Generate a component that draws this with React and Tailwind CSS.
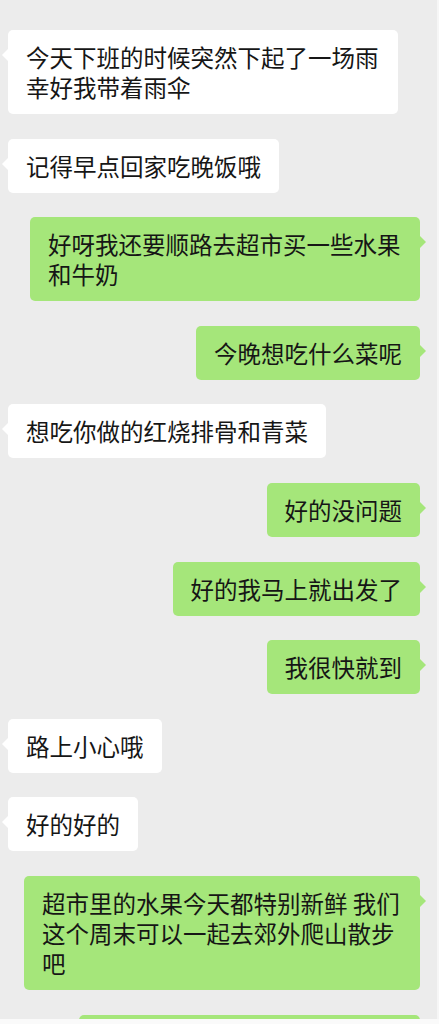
import React from "react";

// neutral placeholder text, same character counts as the reference bubbles
const messages = [
  { side: "left", text: "今天下班的时候突然下起了一场雨幸好我带着雨伞", w: "w-[390px]" },
  { side: "left", text: "记得早点回家吃晚饭哦" },
  { side: "right", text: "好呀我还要顺路去超市买一些水果和牛奶", w: "w-[390px]" },
  { side: "right", text: "今晚想吃什么菜呢" },
  { side: "left", text: "想吃你做的红烧排骨和青菜" },
  { side: "right", text: "好的没问题" },
  { side: "right", text: "好的我马上就出发了" },
  { side: "right", text: "我很快就到" },
  { side: "left", text: "路上小心哦" },
  { side: "left", text: "好的好的" },
  { side: "right", text: "超市里的水果今天都特别新鲜 我们这个周末可以一起去郊外爬山散步吧", w: "w-[396px]" },
  { side: "right", text: "好呀那我们周六早上八点出发" },
];

function Bubble({ side, text, w }) {
  const isRight = side === "right";
  return (
    <div className={`flex ${isRight ? "justify-end" : "justify-start"}`}>
      <div
        className={`relative max-w-[396px] ${w || ""} rounded-[5px] px-[18px] py-[12px] text-[23.5px] leading-[30px] text-[#161616] ${
          isRight ? "bg-[#a5e67a]" : "bg-white"
        }`}
      >
        {isRight ? (
          <span className="absolute -right-[6px] top-[19px] h-0 w-0 border-y-[6px] border-l-[6px] border-y-transparent border-l-[#a5e67a]" />
        ) : (
          <span className="absolute -left-[6px] top-[19px] h-0 w-0 border-y-[6px] border-r-[6px] border-y-transparent border-r-white" />
        )}
        {text}
      </div>
    </div>
  );
}

export default function App() {
  return (
    <div
      className="flex h-[1024px] w-[439px] flex-col overflow-hidden bg-white"
      style={{ fontFamily: '"Noto Sans CJK SC", "Noto Sans", sans-serif' }}
    >
      <div className="h-[1019px] shrink-0 overflow-hidden border-r-2 border-[#f6f6f6] bg-[#ececec] pl-[8px] pr-[17px] pt-[30px]">
        <div className="flex flex-col gap-[24.6px]">
          {messages.map((m, i) => (
            <Bubble key={i} {...m} />
          ))}
        </div>
      </div>
      <div className="flex-1 bg-[#fafafa]" />
    </div>
  );
}
